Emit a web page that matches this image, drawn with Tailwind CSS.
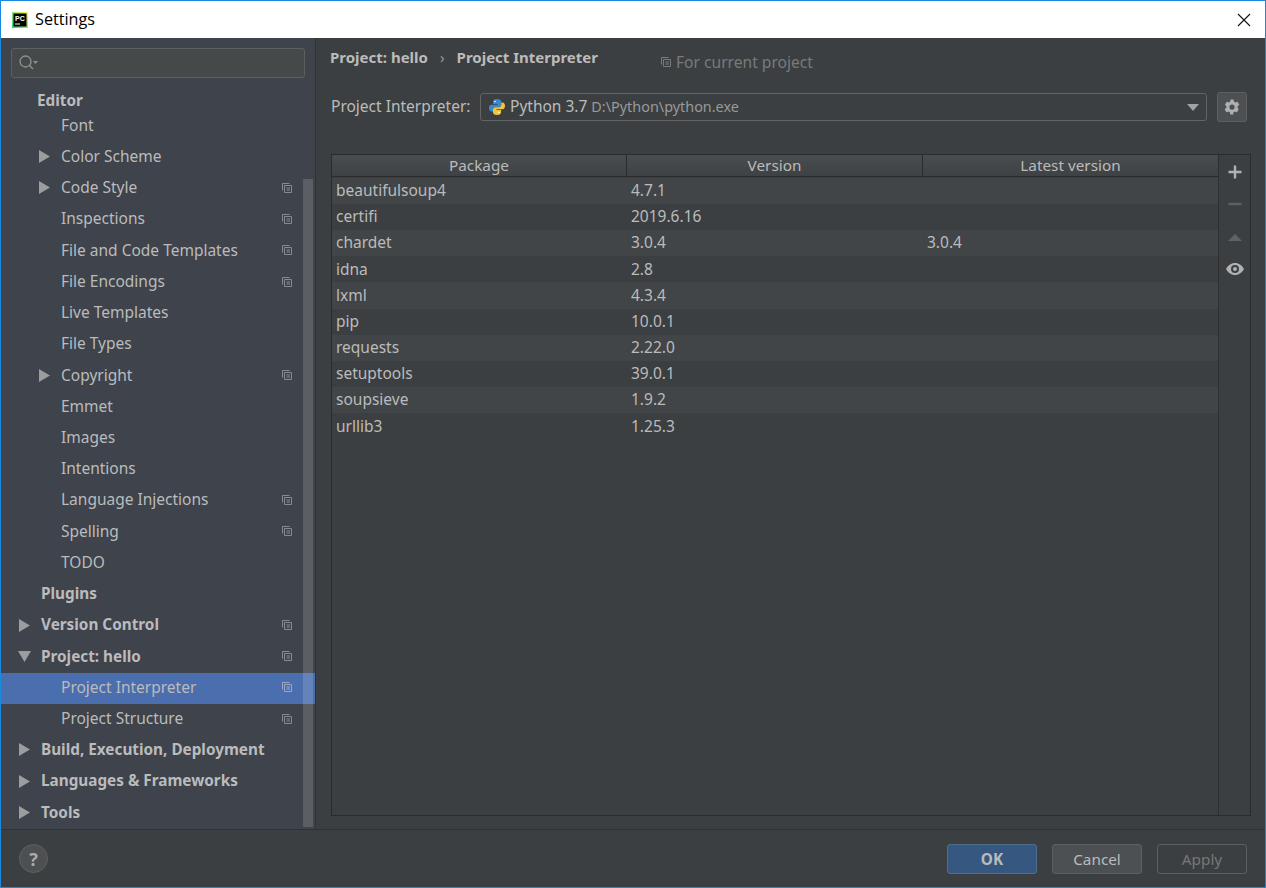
<!DOCTYPE html>
<html><head><meta charset="utf-8"><script src="https://cdn.jsdelivr.net/npm/@tailwindcss/browser@4"></script></head>
<body class="m-0 overflow-hidden">
<svg width="0" height="0" class="absolute"><defs>
<g id="cp"><path d="M1.500 8.500V1.500H8.500" fill="none" stroke="currentColor"/><path d="M3.500 10.500V3.500H10.500V10.500Z" fill="none" stroke="currentColor"/><path d="M5.500 6H9M5.500 8H9" stroke="currentColor"/></g>
<path id="ar" d="M0 0L11 6.500L0 13Z" fill="currentColor"/>
</defs></svg>
<div class="w-[1266px] h-[888px] flex flex-col border border-[#1a8ae0] bg-[#3c3f41] text-[#bbbbbb] font-['Noto_Sans','Open_Sans',sans-serif] text-[15.5px] leading-none overflow-hidden">
<div class="h-[37px] shrink-0 bg-white flex items-center text-black relative">
  <svg width="16" height="16" viewBox="0 0 16 16" class="ml-[11px]"><defs><linearGradient id="pcg" x1="0" y1="1" x2="1" y2="0"><stop offset="0" stop-color="#21d789"/><stop offset="1" stop-color="#fcf84a"/></linearGradient></defs><rect width="16" height="16" fill="url(#pcg)"/><rect x="1.500" y="1.500" width="13" height="13" fill="#000"/><text x="3" y="8.500" font-size="7" font-weight="700" fill="#fff" font-family="Liberation Sans">PC</text><rect x="3" y="11.500" width="5" height="1" fill="#fff"/></svg>
  <span class="ml-[7px] text-[16.2px] font-['Open_Sans'] text-black">Settings</span>
  <svg width="14" height="14" viewBox="0 0 14 14" class="ml-auto mr-[14px]"><path d="M1 1L13 13M13 1L1 13" stroke="#111" stroke-width="1.100"/></svg>
</div>
<div class="flex-1 flex min-h-0">
  <aside class="w-[314px] shrink-0 bg-[#3e434c] relative">
    <div class="mx-[10px] mt-[10px] h-[30px] rounded-[3px] border border-[#5e6060] bg-[#45494a] flex items-center pl-[6px] text-[#9a9a9a]">
      <svg width="22" height="18" viewBox="0 0 22 18"><circle cx="7.500" cy="7.500" r="5.500" fill="none" stroke="#8f9294" stroke-width="1.300"/><path d="M11.500 11.500L15 15" stroke="#8f9294" stroke-width="1.400"/><path d="M15 7h5l-2.500 3z" fill="#8f9294"/></svg>
    </div>
    <div class="mt-[7.7px] flex flex-col [&>div]:pb-[2px]">
      <div class="h-[31.23px] pl-[36px] flex items-center font-bold text-[15.3px]">Editor</div>
      <div class="-mt-[6px] h-[31.23px] pl-[60px] flex items-center">Font</div>
      <div class="h-[31.23px] flex items-center"><svg width="11" height="13" class="ml-[38px] mr-[11px] text-[#9b9d9f]"><use href="#ar"/></svg>Color Scheme</div>
      <div class="h-[31.23px] flex items-center"><svg width="11" height="13" class="ml-[38px] mr-[11px] text-[#9b9d9f]"><use href="#ar"/></svg>Code Style<svg width="12" height="12" class="ml-auto mr-[22px] text-[#888b8d]"><use href="#cp"/></svg></div>
      <div class="h-[31.23px] pl-[60px] pr-[22px] flex items-center">Inspections<svg width="12" height="12" class="ml-auto text-[#888b8d]"><use href="#cp"/></svg></div>
      <div class="h-[31.23px] pl-[60px] pr-[22px] flex items-center">File and Code Templates<svg width="12" height="12" class="ml-auto text-[#888b8d]"><use href="#cp"/></svg></div>
      <div class="h-[31.23px] pl-[60px] pr-[22px] flex items-center">File Encodings<svg width="12" height="12" class="ml-auto text-[#888b8d]"><use href="#cp"/></svg></div>
      <div class="h-[31.23px] pl-[60px] flex items-center">Live Templates</div>
      <div class="h-[31.23px] pl-[60px] flex items-center">File Types</div>
      <div class="h-[31.23px] flex items-center"><svg width="11" height="13" class="ml-[38px] mr-[11px] text-[#9b9d9f]"><use href="#ar"/></svg>Copyright<svg width="12" height="12" class="ml-auto mr-[22px] text-[#888b8d]"><use href="#cp"/></svg></div>
      <div class="h-[31.23px] pl-[60px] flex items-center">Emmet</div>
      <div class="h-[31.23px] pl-[60px] flex items-center">Images</div>
      <div class="h-[31.23px] pl-[60px] flex items-center">Intentions</div>
      <div class="h-[31.23px] pl-[60px] pr-[22px] flex items-center">Language Injections<svg width="12" height="12" class="ml-auto text-[#888b8d]"><use href="#cp"/></svg></div>
      <div class="h-[31.23px] pl-[60px] pr-[22px] flex items-center">Spelling<svg width="12" height="12" class="ml-auto text-[#888b8d]"><use href="#cp"/></svg></div>
      <div class="h-[31.23px] pl-[60px] flex items-center">TODO</div>
      <div class="h-[31.23px] pl-[40px] flex items-center font-bold text-[15.3px]">Plugins</div>
      <div class="h-[31.23px] flex items-center font-bold text-[15.3px]"><svg width="11" height="13" class="ml-[18px] mr-[11px] text-[#9b9d9f]"><use href="#ar"/></svg>Version Control<svg width="12" height="12" class="ml-auto mr-[22px] text-[#888b8d]"><use href="#cp"/></svg></div>
      <div class="h-[31.23px] flex items-center font-bold text-[15.3px]"><svg width="13" height="11" viewBox="0 0 13 11" class="ml-[17px] mr-[10px] text-[#9b9d9f]"><path d="M0 0H13L6.500 11Z" fill="currentColor"/></svg>Project: hello<svg width="12" height="12" class="ml-auto mr-[22px] text-[#888b8d]"><use href="#cp"/></svg></div>
      <div class="h-[31.23px] pl-[60px] pr-[22px] flex items-center bg-[#4b6eaf]">Project Interpreter<svg width="12" height="12" class="ml-auto text-[#9aa8c4]"><use href="#cp"/></svg></div>
      <div class="h-[31.23px] pl-[60px] pr-[22px] flex items-center">Project Structure<svg width="12" height="12" class="ml-auto text-[#888b8d]"><use href="#cp"/></svg></div>
      <div class="h-[31.23px] flex items-center font-bold text-[15.3px]"><svg width="11" height="13" class="ml-[18px] mr-[11px] text-[#9b9d9f]"><use href="#ar"/></svg>Build, Execution, Deployment</div>
      <div class="h-[31.23px] flex items-center font-bold text-[15.3px]"><svg width="11" height="13" class="ml-[18px] mr-[11px] text-[#9b9d9f]"><use href="#ar"/></svg>Languages &amp; Frameworks</div>
      <div class="h-[31.23px] flex items-center font-bold text-[15.3px]"><svg width="11" height="13" class="ml-[18px] mr-[11px] text-[#9b9d9f]"><use href="#ar"/></svg>Tools</div>
    </div>
    <div class="absolute left-[302px] w-[10px] top-[141px] bottom-[2px] bg-white/15"></div>
  </aside>
  <main class="flex-1 border-l border-[#323232] flex flex-col min-w-0">
    <div class="flex items-start h-[54px] pl-[14px] pt-[12px] font-bold text-[15px]">
      <span>Project: hello</span><span class="mx-[12px] font-normal text-[#999]">›</span><span>Project Interpreter</span>
      <svg width="12" height="12" class="ml-[62px] mt-[6px] text-[#787a7c]"><use href="#cp"/></svg>
      <span class="ml-[4px] mt-[5px] font-normal text-[15.6px] text-[#787a7c]">For current project</span>
    </div>
    <div class="flex items-center h-[30px] pl-[15px]">
      <span class="w-[149px] shrink-0 pb-[1px]">Project Interpreter:</span>
      <div class="w-[727px] h-[28px] rounded-[3px] border border-[#646464] bg-[#3c3f41] flex items-center pl-[7px] pr-[7px]">
        <svg width="18" height="18" viewBox="0 0 18 18"><path d="M9 1C6 1 5 2.200 5 4v2h4.500v.8H3.500C2 6.800 1 8 1 10s1 3.500 2.500 3.500H5V11.500c0-1.500 1-2.500 2.500-2.500h3.500c1.500 0 2.300-1 2.300-2.300V4c0-1.800-1.500-3-4.300-3z" fill="#3b89c9"/><path d="M9 17c3 0 4-1.200 4-3v-2H8.500v-.8h6c1.500 0 2.500-1.200 2.500-3.200s-1-3.500-2.500-3.500H13.300v2.200c0 1.500-1 2.500-2.500 2.500H7.500C6 9 5 10 5 11.500V14c0 1.800 1.300 3 4 3z" fill="#f2c53d"/><circle cx="7" cy="3.500" r=".8" fill="#fff"/><circle cx="11" cy="14.500" r=".8" fill="#fff"/></svg>
        <span class="ml-[4px]">Python 3.7</span><span class="ml-[4px] text-[14.4px] text-[#999]">D:\Python\python.exe</span>
        <svg width="12" height="7" viewBox="0 0 12 7" class="ml-auto"><path d="M0 0H12L6 7Z" fill="#a0a2a4"/></svg>
      </div>
      <div class="ml-[10px] w-[30px] h-[30px] rounded-[3px] border border-[#5e6060] bg-[#4c5052] flex items-center justify-center">
        <svg width="18" height="18" viewBox="0 0 24 24"><path fill="#adafb0" fill-rule="evenodd" d="M19.400 13c.1-.3.100-.7.100-1s0-.7-.1-1l2.100-1.600c.2-.2.200-.4.100-.6l-2-3.500c-.1-.2-.4-.3-.6-.2l-2.500 1c-.5-.4-1.100-.7-1.700-1L14 2.400c0-.2-.2-.4-.5-.4h-3c-.3 0-.5.200-.5.400l-.4 2.700c-.6.300-1.200.6-1.700 1l-2.500-1c-.2-.1-.5 0-.6.200l-2 3.500c-.1.200-.1.400.1.600L4.600 11c-.1.300-.1.700-.1 1s0 .7.100 1l-2.100 1.600c-.2.200-.2.400-.1.600l2 3.500c.1.200.4.300.6.200l2.500-1c.5.400 1.100.7 1.700 1l.4 2.700c0 .2.200.4.500.4h3c.3 0 .5-.2.500-.4l.4-2.700c.6-.3 1.200-.6 1.700-1l2.500 1c.2.100.5 0 .6-.2l2-3.500c.1-.2.100-.4-.1-.6zM12 15.500a3.500 3.500 0 1 1 0-7 3.500 3.500 0 0 1 0 7z"/></svg>
      </div>
    </div>
    <div class="mt-[32px] ml-[15px] mr-[14px] h-[662px] border border-[#2b2b2b] flex bg-[#3c3f41]">
      <div class="w-[887px] flex flex-col border-r border-[#2f2f2f]">
        <div class="h-[22px] shrink-0 grid grid-cols-[295px_296px_1fr] bg-gradient-to-b from-[#4a4d4f] to-[#3f4244] border-b border-[#2b2b2b] text-center items-center text-[15.3px] mb-[.6px]">
          <span class="border-r border-[#2b2b2b] h-full flex items-center justify-center pt-[1px]">Package</span>
          <span class="border-r border-[#2b2b2b] h-full flex items-center justify-center pt-[1px]">Version</span>
          <span class="h-full flex items-center justify-center pt-[1px]">Latest version</span>
        </div>
        <div class="h-[26.2px] grid grid-cols-[295px_296px_1fr] items-center bg-[#414547] pl-[4px]"><span>beautifulsoup4</span><span>4.7.1</span><span></span></div>
        <div class="h-[26.2px] grid grid-cols-[295px_296px_1fr] items-center pl-[4px]"><span>certifi</span><span>2019.6.16</span><span></span></div>
        <div class="h-[26.2px] grid grid-cols-[295px_296px_1fr] items-center bg-[#414547] pl-[4px]"><span>chardet</span><span>3.0.4</span><span>3.0.4</span></div>
        <div class="h-[26.2px] grid grid-cols-[295px_296px_1fr] items-center pl-[4px]"><span>idna</span><span>2.8</span><span></span></div>
        <div class="h-[26.2px] grid grid-cols-[295px_296px_1fr] items-center bg-[#414547] pl-[4px]"><span>lxml</span><span>4.3.4</span><span></span></div>
        <div class="h-[26.2px] grid grid-cols-[295px_296px_1fr] items-center pl-[4px]"><span>pip</span><span>10.0.1</span><span></span></div>
        <div class="h-[26.2px] grid grid-cols-[295px_296px_1fr] items-center bg-[#414547] pl-[4px]"><span>requests</span><span>2.22.0</span><span></span></div>
        <div class="h-[26.2px] grid grid-cols-[295px_296px_1fr] items-center pl-[4px]"><span>setuptools</span><span>39.0.1</span><span></span></div>
        <div class="h-[26.2px] grid grid-cols-[295px_296px_1fr] items-center bg-[#414547] pl-[4px]"><span>soupsieve</span><span>1.9.2</span><span></span></div>
        <div class="h-[26.2px] grid grid-cols-[295px_296px_1fr] items-center pl-[4px]"><span>urllib3</span><span>1.25.3</span><span></span></div>
      </div>
      <div class="flex-1 flex flex-col items-center pt-[9px] gap-[16px]">
        <svg width="16" height="16" viewBox="0 0 16 16"><path d="M8 1.500V14.500M1.500 8H14.500" stroke="#afb1b3" stroke-width="2.400"/></svg>
        <svg width="16" height="16" viewBox="0 0 16 16"><path d="M1.500 8H14.500" stroke="#5f6163" stroke-width="2.400"/></svg>
        <svg width="16" height="16" viewBox="0 0 16 16"><path d="M1 13L8 6L15 13Z" fill="#5f6163"/></svg>
        <svg width="18" height="12" viewBox="0 0 18 12" class="mt-[3px]"><path fill="#afb1b3" fill-rule="evenodd" d="M9 0C5 0 2 2.500 0 6c2 3.500 5 6 9 6s7-2.500 9-6c-2-3.500-5-6-9-6zm0 10a4 4 0 1 1 0-8 4 4 0 0 1 0 8zm0-6a2 2 0 1 0 0 4 2 2 0 0 0 0-4z"/></svg>
      </div>
    </div>
  </main>
</div>
<div class="h-[58px] shrink-0 border-t border-[#323232] flex items-center relative text-[15.3px]">
  <div class="ml-[18px] w-[29px] h-[29px] rounded-full border border-[#5e6060] bg-[#4c5052] flex items-center justify-center font-bold text-[18px] text-[#a7a9aa]">?</div>
  <div class="ml-auto mr-[18px] flex gap-[15px]">
    <div class="w-[90px] h-[30px] pt-[3px] rounded-[3px] border border-[#4c708c] bg-[#365880] flex items-center justify-center font-bold">OK</div>
    <div class="w-[90px] h-[30px] pt-[3px] rounded-[3px] border border-[#5e6060] bg-[#4c5052] flex items-center justify-center">Cancel</div>
    <div class="w-[90px] h-[30px] pt-[3px] rounded-[3px] border border-[#5e6060] bg-[#3c3f41] flex items-center justify-center text-[#777]">Apply</div>
  </div>
</div>
</div>
</body></html>
